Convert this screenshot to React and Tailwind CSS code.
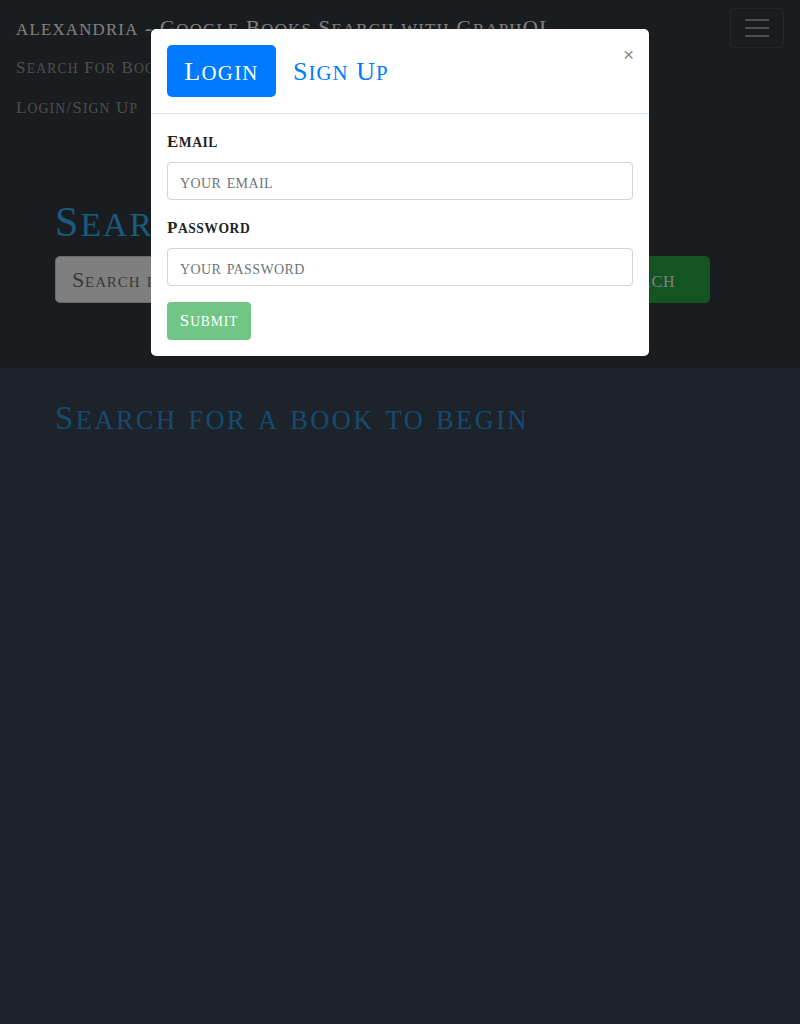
import React from 'react';

// Cinzel-like small caps: capitals at full size, lowercase as smaller capitals
const SC = ({ text }) =>
  text.match(/[a-z]+|[^a-z]+/g).map((part, i) =>
    /[a-z]/.test(part[0]) ? (
      <span key={i} className="text-[0.8em] leading-none">
        {part.toUpperCase()}
      </span>
    ) : (
      <React.Fragment key={i}>{part}</React.Fragment>
    )
  );

const Navbar = () => (
  <nav className="bg-[#343a40] px-4 py-2">
    <div className="flex items-start justify-between">
      <a className="text-white text-[21px] leading-[30px] py-[5px] tracking-[0.06em] whitespace-nowrap">
        <SC text="alexandria - Google Books Search with GraphQL" />
      </a>
      <button className="w-[54px] h-[40px] border border-white/10 rounded flex flex-col items-center justify-center gap-[6px]">
        <span className="block w-[24px] h-[2px] bg-white/50" />
        <span className="block w-[24px] h-[2px] bg-white/50" />
        <span className="block w-[24px] h-[2px] bg-white/50" />
      </button>
    </div>
    <div className="flex flex-col">
      <a className="text-white/50 text-[17px] leading-[24px] py-2 tracking-[0.07em]">
        <SC text="Search For Books" />
      </a>
      <a className="text-white/50 text-[17px] leading-[24px] py-2 tracking-[0.07em]">
        <SC text="Login/Sign Up" />
      </a>
    </div>
  </nav>
);

const Hero = () => (
  <section className="bg-[#343a40] h-[232px] px-[55px] pt-[62px]">
    <h1 className="text-[#36b4ff] text-[42px] leading-[48px] mb-[10px] tracking-[0.05em]">
      <SC text="Search for Books!" />
    </h1>
    <div className="flex">
      <input
        className="w-[510px] h-[47px] bg-white rounded-[5px] border border-gray-300 px-4 text-[22px] placeholder-[#6c757d] [font-variant:small-caps] tracking-[0.04em]"
        placeholder="Search for a book"
      />
      <button className="ml-[5px] w-[140px] h-[47px] bg-[#28a745] text-white text-[20px] rounded-[5px] tracking-[0.05em]">
        <SC text="Search" />
      </button>
    </div>
  </section>
);

const Results = () => (
  <section className="px-[55px] pt-[31px]">
    <h2 className="text-[#2d96dc] text-[33px] leading-[38px] tracking-[0.075em]">
      <SC text="Search for a book to begin" />
    </h2>
  </section>
);

const LoginModal = () => (
  <div className="absolute left-[151px] top-[29px] w-[498px] bg-white rounded-[5px]">
    <div className="relative flex items-center p-4 border-b border-[#dee2e6]">
      <button className="w-[109px] h-[52px] bg-[#007bff] text-white text-[26px] rounded-[5px] tracking-[0.05em]">
        <SC text="Login" />
      </button>
      <button className="ml-[17px] text-[#007bff] text-[26px] tracking-[0.04em]">
        <SC text="Sign Up" />
      </button>
      <span className="absolute right-[15px] top-[15px] text-[19px] leading-[22px] text-[#8a8a8a] font-['Liberation_Sans',sans-serif]">
        ×
      </span>
    </div>
    <div className="p-4">
      <label className="block text-[#212529] font-bold text-[17px] leading-[24px] mb-2 tracking-[0.03em]">
        <SC text="Email" />
      </label>
      <input
        className="block w-full h-[38px] border border-[#ced4da] rounded px-3 text-[20px] placeholder-[#6c757d] mb-4 [font-variant:small-caps] tracking-[0.02em]"
        placeholder="your email"
      />
      <label className="block text-[#212529] font-bold text-[17px] leading-[24px] mb-2 tracking-[0.03em]">
        <SC text="Password" />
      </label>
      <input
        className="block w-full h-[38px] border border-[#ced4da] rounded px-3 text-[20px] placeholder-[#6c757d] mb-4 [font-variant:small-caps] tracking-[0.02em]"
        placeholder="your password"
      />
      <button className="w-[84px] h-[38px] bg-[#71c686] text-white text-[17px] rounded tracking-[0.05em]">
        <SC text="Submit" />
      </button>
    </div>
  </div>
);

export default function App() {
  return (
    <div className="relative min-h-[1024px] bg-[#3a4656] font-['Liberation_Serif',serif]">
      <Navbar />
      <Hero />
      <Results />
      <div className="absolute inset-0 bg-black/50" />
      <LoginModal />
    </div>
  );
}
